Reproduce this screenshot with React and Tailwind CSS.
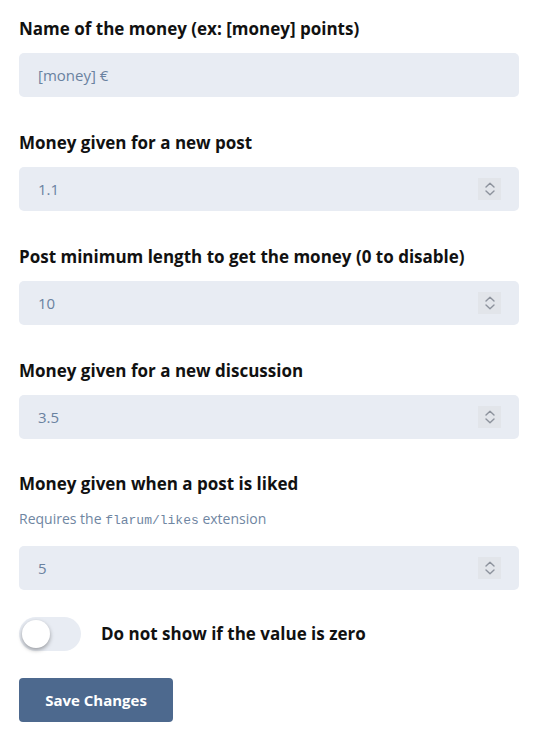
import React from "react";

function Spinner() {
  return (
    <div className="flex flex-col items-center justify-center w-[23px] h-[22px] bg-[#e2e5ea] gap-[2px]">
      <svg width="10" height="6" viewBox="0 0 10 6" fill="none">
        <path d="M1 5L5 1.2L9 5" stroke="#8d939d" strokeWidth="1.4" strokeLinecap="round" strokeLinejoin="round" />
      </svg>
      <svg width="10" height="6" viewBox="0 0 10 6" fill="none">
        <path d="M1 1L5 4.8L9 1" stroke="#8d939d" strokeWidth="1.4" strokeLinecap="round" strokeLinejoin="round" />
      </svg>
    </div>
  );
}

function Field({ label, value, number, help }) {
  return (
    <div className="mb-[35px]">
      <div className="text-[17px] leading-[22px] font-bold text-[#111111]">{label}</div>
      {help ? (
        <div className="mt-[14px] mb-[15px] text-[14px] leading-[20px] text-[#6f86a2]">
          Requires the <code className="font-['Liberation_Mono',monospace] text-[13px]">flarum/likes</code> extension
        </div>
      ) : (
        <div className="h-[13px]" />
      )}
      <div className="flex items-center justify-between h-[44px] w-[500px] rounded-[5px] bg-[#e8ecf3] pl-[19px] pr-[18px]">
        <span className="text-[15px] text-[#6a82a0]">{value}</span>
        {number && <Spinner />}
      </div>
    </div>
  );
}

export default function App() {
  return (
    <div className="bg-white w-[545px] min-h-[745px] pl-[19px] pt-[18px] font-['Open_Sans',sans-serif]">
      <Field label="Name of the money (ex: [money] points)" value="[money] €" />
      <Field label="Money given for a new post" value="1.1" number />
      <Field label="Post minimum length to get the money (0 to disable)" value="10" number />
      <div className="-mb-[1px]">
        <Field label="Money given for a new discussion" value="3.5" number />
      </div>
      <div className="-mb-[8px]">
        <Field label="Money given when a post is liked" value="5" number help />
      </div>
      <div className="flex items-center">
        <div className="relative w-[62px] h-[34px] rounded-full bg-[#e8ecf3]">
          <div className="absolute left-[3px] top-[3px] w-[28px] h-[28px] rounded-full bg-white shadow-[0_2px_4px_rgba(0,0,0,0.35)]" />
        </div>
        <span className="ml-[20px] text-[17px] font-bold text-[#111111]">Do not show if the value is zero</span>
      </div>
      <button className="mt-[27px] h-[44px] w-[154px] rounded-[4px] bg-[#4d698e] text-white text-[15px] font-bold">
        Save Changes
      </button>
    </div>
  );
}
